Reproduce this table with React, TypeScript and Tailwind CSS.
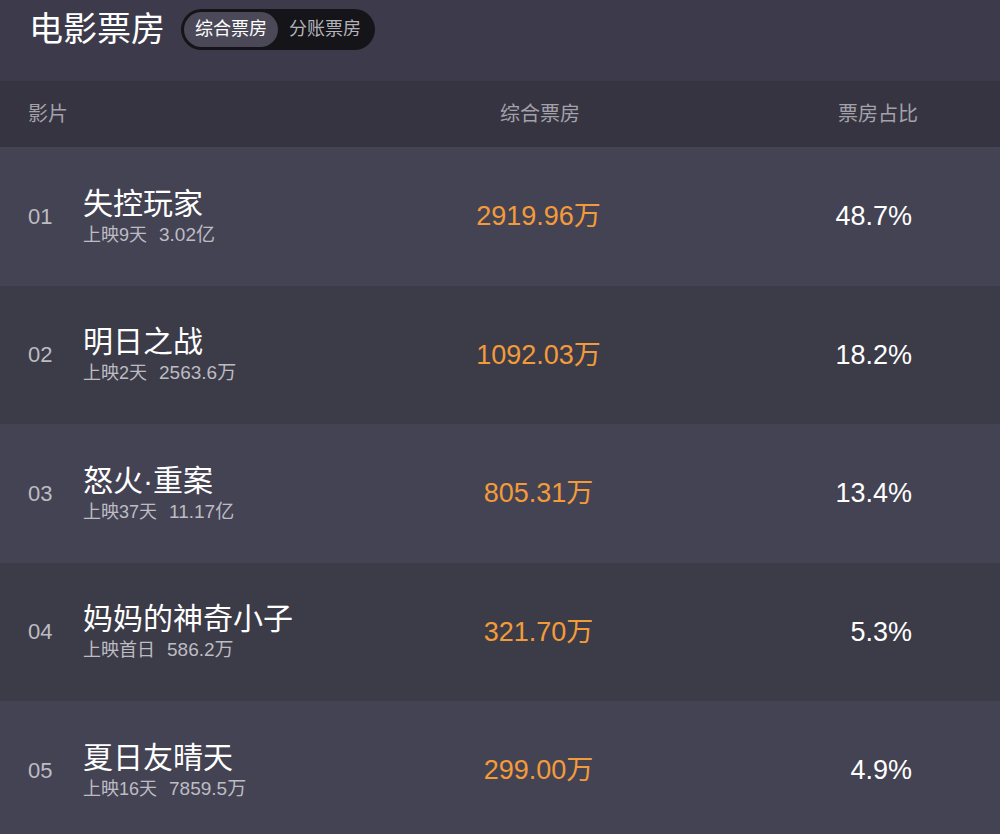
import React from 'react';

type Movie = {
  rank: string;
  name: string;
  days: string;
  total: string;
  box: string;
  rate: string;
};

const movies: Movie[] = [
  { rank: '01', name: '失控玩家', days: '上映9天', total: '3.02亿', box: '2919.96万', rate: '48.7%' },
  { rank: '02', name: '明日之战', days: '上映2天', total: '2563.6万', box: '1092.03万', rate: '18.2%' },
  { rank: '03', name: '怒火·重案', days: '上映37天', total: '11.17亿', box: '805.31万', rate: '13.4%' },
  { rank: '04', name: '妈妈的神奇小子', days: '上映首日', total: '586.2万', box: '321.70万', rate: '5.3%' },
  { rank: '05', name: '夏日友晴天', days: '上映16天', total: '7859.5万', box: '299.00万', rate: '4.9%' },
];

const font = { fontFamily: '"Liberation Sans", "Noto Sans CJK SC", sans-serif' };

export default function App() {
  return (
    <div className="w-[1000px] h-[834px] overflow-hidden bg-[#3d3b4b] text-white" style={font}>
      {/* title bar */}
      <div className="h-[81px] flex items-start pt-[9px] pl-[29px]">
        <h1 className="text-[34px] leading-[41px] font-normal">电影票房</h1>
        <div className="ml-[16px] h-[41px] rounded-full bg-[#151419] p-[3px] flex items-center">
          <button className="h-[35px] w-[94px] rounded-full bg-[#4b4958] text-[18px] text-white">综合票房</button>
          <button className="h-[35px] w-[94px] rounded-full text-[18px] text-[#b4b3bb]">分账票房</button>
        </div>
      </div>

      {/* header */}
      <div className="h-[66px] bg-[#363441] grid grid-cols-[402px_220px_1fr] items-center px-[28px] text-[20px] text-[#a3a2aa]">
        <div>影片</div>
        <div className="text-center">综合票房</div>
        <div className="text-right pr-[54px]">票房占比</div>
      </div>

      {movies.map((m, i) => (
        <div
          key={m.rank}
          className={`h-[138.5px] grid grid-cols-[402px_220px_1fr] items-center px-[28px] ${
            i % 2 === 0 ? 'bg-[#444353]' : 'bg-[#3c3b48]'
          }`}
        >
          <div className="flex items-center">
            <span className="w-[55px] text-[22px] text-[#bdbcc3]">{m.rank}</span>
            <div className="flex flex-col">
              <span className="text-[30px] leading-[34px]">{m.name}</span>
              <span className="text-[18px] leading-[22px] text-[#bdbcc3] mt-[3px]">
                {m.days}
                <span className="ml-[12px] text-[19px]">{m.total}</span>
              </span>
            </div>
          </div>
          <div className="text-center text-[27px] text-[#f39b3a] pr-[3px]">{m.box}</div>
          <div className="text-right pr-[60px] text-[27px]">{m.rate}</div>
        </div>
      ))}
    </div>
  );
}
